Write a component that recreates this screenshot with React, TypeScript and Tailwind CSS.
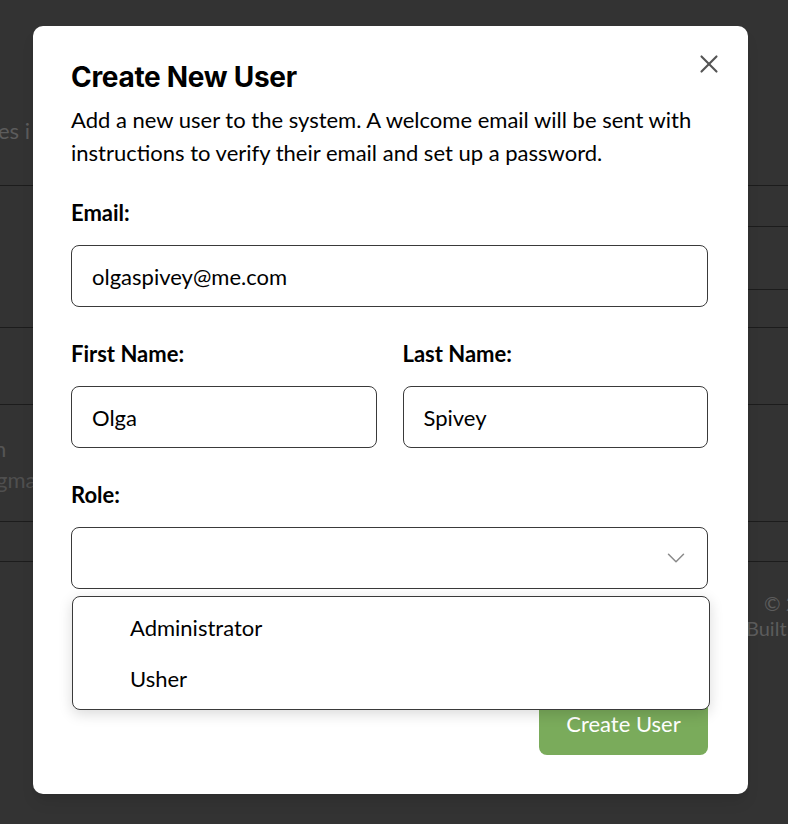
import { ChevronDown, X } from 'lucide-react';

const lato = { fontFamily: 'Lato, "Open Sans", sans-serif' };

function Field({ label, value }: { label: string; value: string }) {
  return (
    <div className="flex flex-col">
      <label className="text-[22px] leading-[24px] font-bold text-black mb-[20px]">{label}</label>
      <div className="h-[62px] rounded-[8px] border border-[#3a3a3a] px-[20px] flex items-center text-[22px] text-black">
        {value}
      </div>
    </div>
  );
}

export default function App() {
  return (
    <div className="relative w-[788px] h-[824px] overflow-hidden bg-[#333333]" style={lato}>
      {/* page behind the overlay */}
      <div className="text-[#5c5c5c] text-[22px]">
        <div className="h-[185px] pt-[114px] -ml-[2px] whitespace-nowrap">es i</div>
        <div className="h-[142px] border-t border-[#1c1c1c] flex flex-col">
          <div className="h-[40px]" />
          <div className="ml-auto w-[48px] h-[63px] border-t border-[#1c1c1c]" />
          <div className="ml-auto w-[48px] border-t border-[#1c1c1c]" />
        </div>
        <div className="h-[77px] border-t border-[#1c1c1c]" />
        <div className="h-[117px] border-t border-[#1c1c1c] pt-[28px] leading-[31px]">
          <div className="-ml-[6px] text-[#555555]">n</div>
          <div className="-ml-[4px] text-[#4f4f4f]">gma</div>
        </div>
        <div className="h-[40px] border-t border-[#1c1c1c]" />
        <div className="border-t border-[#1c1c1c] pt-[29px] flex flex-col text-[20px] leading-[25px] whitespace-nowrap">
          <div className="pl-[764px]">© 2</div>
          <div className="pl-[746px]">Built</div>
        </div>
      </div>

      {/* modal */}
      <div className="absolute left-[33px] top-[26px] w-[715px] h-[768px] bg-white rounded-[10px] shadow-lg pl-[38px] pr-[40px] pt-[35px] pb-[39px] flex flex-col">
        <button className="absolute right-[24px] top-[23px] text-[#555555]">
          <X size={30} strokeWidth={1.7} />
        </button>
        <h2
          className="text-[28px] leading-[32px] font-bold text-black tracking-[-0.3px]"
          style={{ fontFamily: 'Inter, "Liberation Sans", sans-serif' }}
        >
          Create New User
        </h2>
        <p className="mt-[10px] text-[22px] leading-[33px] text-black">
          Add a new user to the system. A welcome email will be sent with instructions to verify their email and set up a password.
        </p>

        <div className="mt-[32px]">
          <Field label="Email:" value="olgaspivey@me.com" />
        </div>

        <div className="mt-[35px] grid grid-cols-2 gap-[26px]">
          <Field label="First Name:" value="Olga" />
          <Field label="Last Name:" value="Spivey" />
        </div>

        <div className="mt-[35px] flex flex-col">
          <label className="text-[22px] leading-[24px] font-bold text-black mb-[20px]">Role:</label>
          <div className="relative">
            <div className="h-[62px] rounded-[8px] border border-[#3a3a3a] px-[20px] flex items-center justify-end">
              <ChevronDown size={30} strokeWidth={1.2} className="text-[#8a8a8a] -mr-[4px]" />
            </div>
            <div className="absolute top-[69px] left-px -right-[2px] z-10 bg-white rounded-[8px] border border-[#3a3a3a] shadow-[0_4px_14px_rgba(0,0,0,0.15)] py-[5px] text-[22px] text-black">
              <div className="pl-[57px] h-[51px] flex items-center">Administrator</div>
              <div className="pl-[57px] h-[51px] flex items-center">Usher</div>
            </div>
          </div>
        </div>

        <div className="mt-auto flex justify-end">
          <button className="h-[61px] w-[169px] rounded-[8px] bg-[#7aab5b] text-white text-[22px] pb-[2px]">
            Create User
          </button>
        </div>
      </div>
    </div>
  );
}
